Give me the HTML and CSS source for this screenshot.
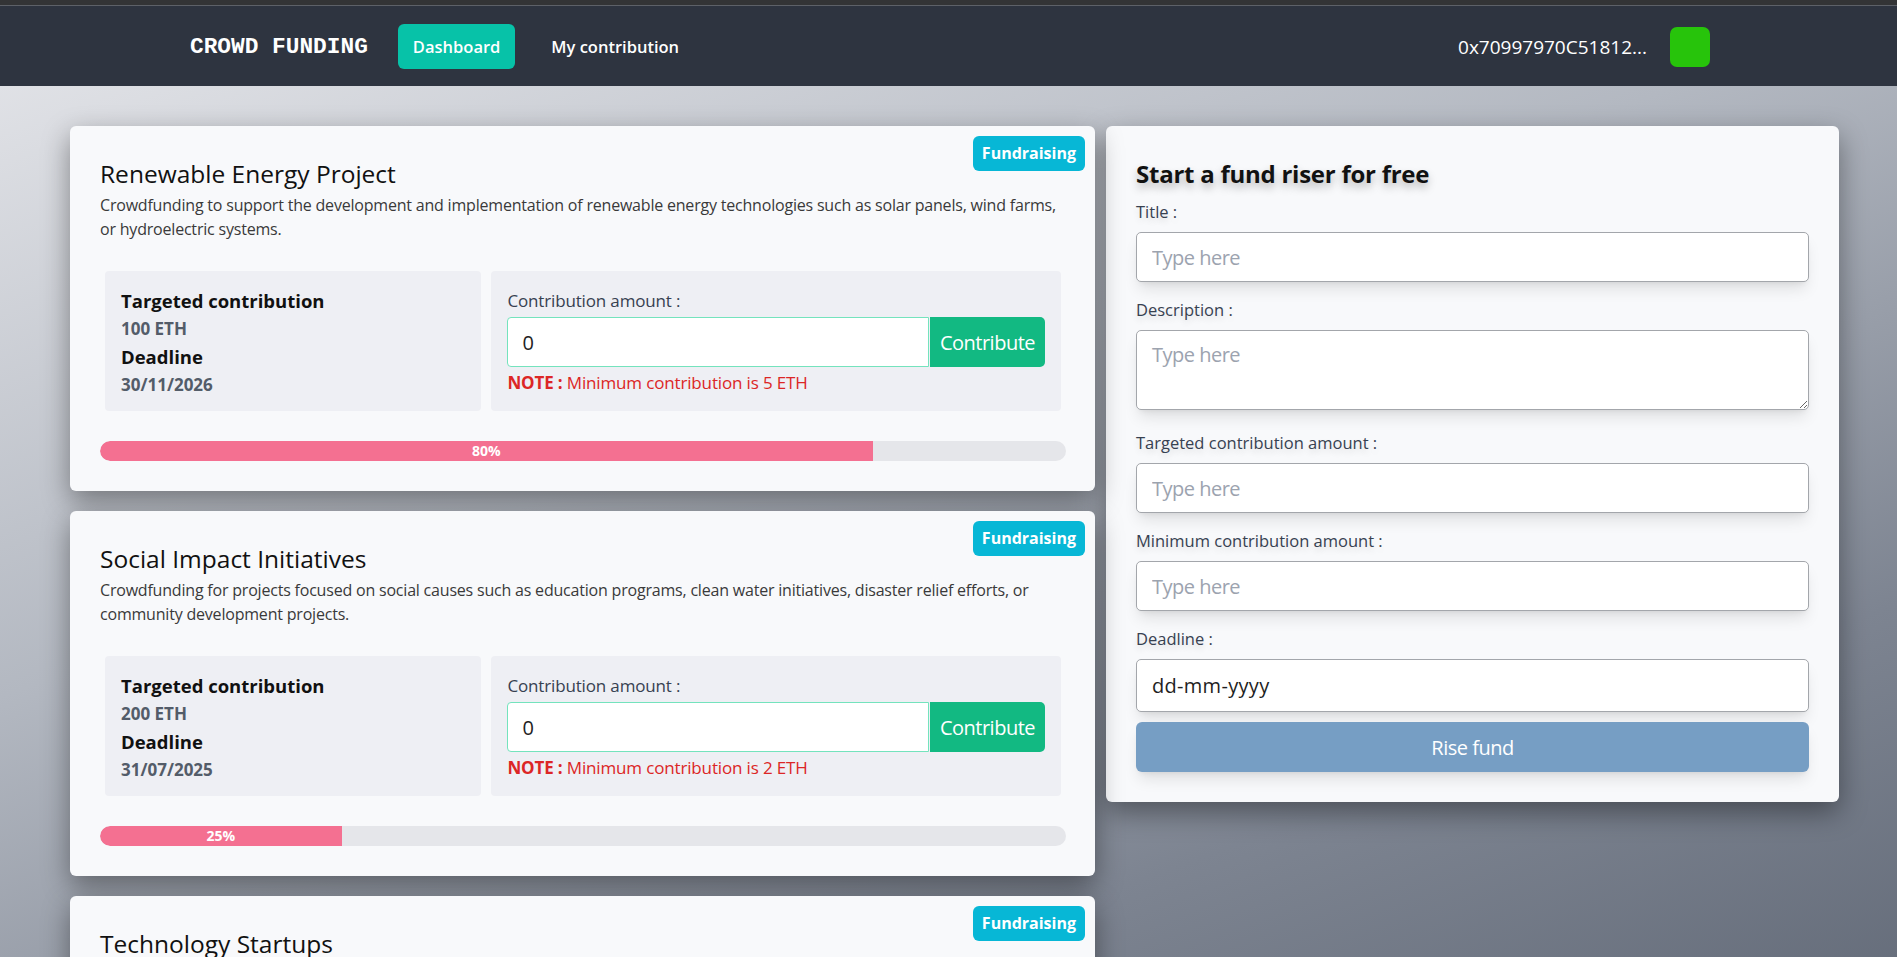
FILE: index.html
```html
<!DOCTYPE html>
<html lang="en">
<head>
<meta charset="utf-8">
<title>Crowd Funding</title>
<link rel="stylesheet" href="styles.css">
</head>
<body>
<header class="nav">
  <div class="nav-inner">
    <div class="nav-left">
      <span class="logo">CROWD FUNDING</span>
      <a class="nav-link active" href="#">Dashboard</a>
      <a class="nav-link" href="#">My contribution</a>
    </div>
    <div class="nav-right">
      <span class="addr">0x70997970C51812...</span>
      <span class="avatar"></span>
    </div>
  </div>
</header>

<main class="main">
  <section class="list">
    <article class="card">
      <span class="badge">Fundraising</span>
      <h2 class="card-title">Renewable Energy Project</h2>
      <p class="card-desc">Crowdfunding to support the development and implementation of renewable energy technologies such as solar panels, wind farms, or hydroelectric systems.</p>
      <div class="stats">
        <div class="box info">
          <div class="info-head">Targeted contribution</div>
          <div class="info-val">100 ETH</div>
          <div class="info-head">Deadline</div>
          <div class="info-val">30/11/2026</div>
        </div>
        <div class="box contrib">
          <label class="contrib-label">Contribution amount :</label>
          <div class="contrib-row">
            <input class="contrib-input" type="text" value="0">
            <button class="contrib-btn">Contribute</button>
          </div>
          <p class="note"><b>NOTE :</b> Minimum contribution is 5 ETH</p>
        </div>
      </div>
      <div class="progress"><div class="progress-fill" style="width:80%">80%</div></div>
    </article>

    <article class="card">
      <span class="badge">Fundraising</span>
      <h2 class="card-title">Social Impact Initiatives</h2>
      <p class="card-desc">Crowdfunding for projects focused on social causes such as education programs, clean water initiatives, disaster relief efforts, or community development projects.</p>
      <div class="stats">
        <div class="box info">
          <div class="info-head">Targeted contribution</div>
          <div class="info-val">200 ETH</div>
          <div class="info-head">Deadline</div>
          <div class="info-val">31/07/2025</div>
        </div>
        <div class="box contrib">
          <label class="contrib-label">Contribution amount :</label>
          <div class="contrib-row">
            <input class="contrib-input" type="text" value="0">
            <button class="contrib-btn">Contribute</button>
          </div>
          <p class="note"><b>NOTE :</b> Minimum contribution is 2 ETH</p>
        </div>
      </div>
      <div class="progress"><div class="progress-fill" style="width:25%">25%</div></div>
    </article>

    <article class="card">
      <span class="badge">Fundraising</span>
      <h2 class="card-title">Technology Startups</h2>
      <p class="card-desc">Crowdfunding for innovative technology startups developing new products, apps and services that can change the way we live and work.</p>
      <div class="stats">
        <div class="box info">
          <div class="info-head">Targeted contribution</div>
          <div class="info-val">150 ETH</div>
          <div class="info-head">Deadline</div>
          <div class="info-val">15/03/2026</div>
        </div>
        <div class="box contrib">
          <label class="contrib-label">Contribution amount :</label>
          <div class="contrib-row">
            <input class="contrib-input" type="text" value="0">
            <button class="contrib-btn">Contribute</button>
          </div>
          <p class="note"><b>NOTE :</b> Minimum contribution is 3 ETH</p>
        </div>
      </div>
      <div class="progress"><div class="progress-fill" style="width:40%">40%</div></div>
    </article>
  </section>

  <aside class="form-card">
    <h3 class="form-title">Start a fund riser for free</h3>
    <label class="field-label first">Title :</label>
    <input class="field" type="text" placeholder="Type here">
    <label class="field-label">Description :</label>
    <textarea class="field area" placeholder="Type here"></textarea>
    <label class="field-label after-area">Targeted contribution amount :</label>
    <input class="field" type="text" placeholder="Type here">
    <label class="field-label">Minimum contribution amount :</label>
    <input class="field" type="text" placeholder="Type here">
    <label class="field-label">Deadline :</label>
    <input class="field date" type="text" value="dd-mm-yyyy">
    <button class="rise-btn">Rise fund</button>
  </aside>
</main>
</body>
</html>
```

FILE: styles.css
```css
html {
  scrollbar-width: none;
}
html::-webkit-scrollbar {
  display: none;
}
* {
  box-sizing: border-box;
}
body {
  margin: 0;
  font-family: "Open Sans", "Noto Sans", sans-serif;
  font-size: 16px;
  line-height: 24px;
  color: #111;
  min-height: 100vh;
  background: linear-gradient(160deg, #e6e7eb 0%, #b3b8c1 35%, #7d8491 65%, #525a68 100%);
}

/* NAV */
.nav {
  background: #2e3440;
  border-top: 5px solid #333436;
  box-shadow: inset 0 1px 0 #5d6168;
  height: 86px;
}
.nav-inner {
  height: 81px;
  display: flex;
  align-items: center;
  justify-content: space-between;
  padding: 2px 187px 0 190px;
}
.nav-left {
  display: flex;
  align-items: center;
}
.logo {
  font-family: "Liberation Mono", monospace;
  font-weight: 700;
  font-size: 22.8px;
  color: #fff;
  margin-right: 30px;
}
.nav-link {
  display: block;
  height: 45px;
  line-height: 45px;
  padding: 0 15px;
  border-radius: 6px;
  color: #fff;
  font-weight: 600;
  font-size: 16.5px;
  text-decoration: none;
  margin-right: 21px;
}
.nav-link.active {
  background: #07c2a8;
}
.nav-right {
  display: flex;
  align-items: center;
}
.addr {
  color: #fff;
  font-size: 19px;
  margin-right: 23px;
}
.avatar {
  display: block;
  width: 40px;
  height: 40px;
  border-radius: 7px;
  background: #27c40b;
}

/* MAIN */
.main {
  display: grid;
  grid-template-columns: 1025px 733px;
  column-gap: 11px;
  align-items: start;
  padding: 40px 58px 40px 70px;
}
.list {
  display: flex;
  flex-direction: column;
  gap: 20px;
}
.card {
  position: relative;
  background: #f8f9fb;
  border-radius: 6px;
  padding: 30px 29px 30px 30px;
  box-shadow: 0 10px 28px rgba(0, 0, 0, 0.4);
}
.badge {
  position: absolute;
  top: 10px;
  right: 10px;
  height: 35px;
  line-height: 35px;
  padding: 0 9px;
  border-radius: 6px;
  background: #07b7d6;
  color: #fff;
  font-weight: 700;
  font-size: 16px;
}
.card-title {
  margin: 2px 0 3px;
  font-size: 24.5px;
  line-height: 32px;
  font-weight: 400;
  color: #111;
}
.card-desc {
  margin: 0;
  font-size: 16px;
  line-height: 24px;
  color: #3a3a3a;
  letter-spacing: -0.2px;
}
.stats {
  display: grid;
  grid-template-columns: 40% 60%;
  margin-top: 25px;
}
.box {
  margin: 5px;
  background: #eeeff4;
  border-radius: 4px;
}
.info {
  padding: 16px 16px 12px;
}
.info-head {
  font-size: 18.5px;
  line-height: 28px;
  font-weight: 700;
  color: #111;
}
.info-val {
  font-size: 17px;
  line-height: 28px;
  font-weight: 700;
  color: #535c69;
}
.contrib {
  padding: 18px 16px 14px;
}
.contrib-label {
  display: block;
  font-size: 17px;
  color: #374151;
  margin-bottom: 4px;
  letter-spacing: -0.15px;
}
.contrib-row {
  display: flex;
  height: 50px;
}
.contrib-input {
  flex: 1;
  min-width: 0;
  height: 50px;
  border: 1px solid #74e3bd;
  border-radius: 4px 0 0 4px;
  background: #fff;
  padding: 0 14px;
  font-family: inherit;
  font-size: 20px;
  color: #222;
  outline: none;
  margin-right: 1px;
}
.contrib-btn {
  width: 115px;
  height: 50px;
  border: 0;
  border-radius: 0 5px 5px 0;
  background: #12b982;
  color: #fff;
  font-family: inherit;
  font-size: 20px;
  padding: 0;
  letter-spacing: -0.5px;
}
.note {
  margin: 4px 0 0;
  font-size: 17px;
  color: #dc2626;
  letter-spacing: -0.15px;
}
.progress {
  margin-top: 25px;
  height: 20px;
  border-radius: 10px;
  background: #e5e6ea;
  overflow: hidden;
}
.progress-fill {
  height: 20px;
  background: #f47091;
  border-radius: 10px 0 0 10px;
  color: #fff;
  font-size: 14px;
  line-height: 20px;
  font-weight: 700;
  text-align: center;
}

/* FORM */
.form-card {
  background: #f8f9fb;
  border-radius: 6px;
  padding: 30px;
  box-shadow: 0 10px 28px rgba(0, 0, 0, 0.4);
  display: flex;
  flex-direction: column;
}
.form-title {
  margin: 2px 0 0;
  font-size: 24px;
  line-height: 32px;
  font-weight: 700;
  color: #111;
  letter-spacing: -0.25px;
  text-shadow: 0 5px 8px rgba(0, 0, 0, 0.28);
}
.field-label {
  display: block;
  margin: 16px 0 8px;
  font-size: 16.5px;
  color: #374151;
  text-shadow: 0 4px 6px rgba(0, 0, 0, 0.12);
}
.field-label.first {
  margin-top: 10px;
}
.field-label.after-area {
  margin-top: 21px;
}
.field {
  display: block;
  width: 100%;
  height: 50px;
  border: 1px solid #a3a6ab;
  border-radius: 5px;
  background: #fff;
  padding: 0 15px;
  font-family: inherit;
  font-size: 20px;
  color: #1f1f1f;
  outline: none;
  box-shadow: 0 10px 15px -3px rgba(0, 0, 0, 0.1), 0 4px 6px -4px rgba(0, 0, 0, 0.1);
  letter-spacing: -0.5px;
}
.field::placeholder {
  color: #9ca3af;
}
.field.area {
  height: 80px;
  padding-top: 10px;
  resize: vertical;
}
.field.date {
  height: 53px;
  letter-spacing: 0.3px;
}
.rise-btn {
  margin-top: 10px;
  height: 50px;
  border: 0;
  border-radius: 6px;
  background: #769ec4;
  color: #fff;
  font-family: inherit;
  font-size: 20px;
  letter-spacing: -0.5px;
  box-shadow: 0 10px 15px -3px rgba(0, 0, 0, 0.1), 0 4px 6px -4px rgba(0, 0, 0, 0.1);
}
```
